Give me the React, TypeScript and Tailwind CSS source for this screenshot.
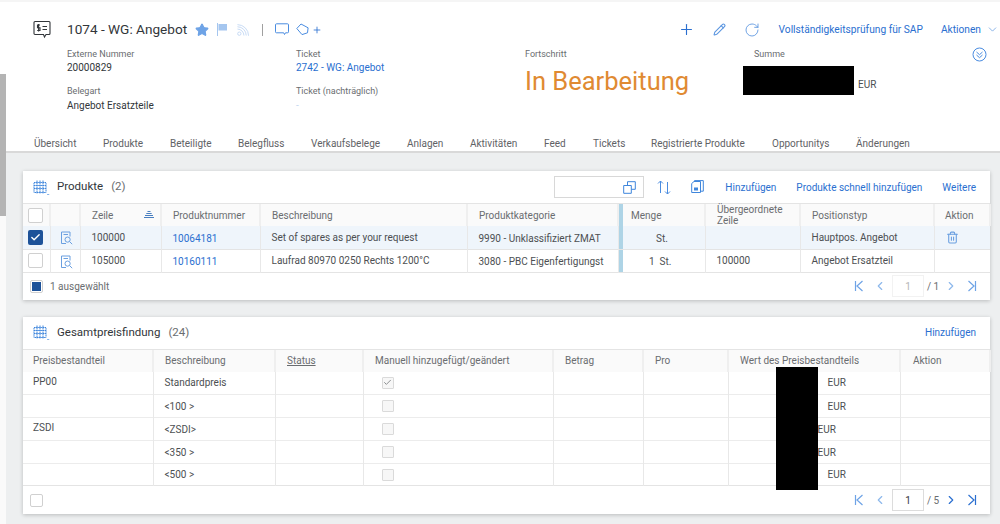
import type { ReactNode } from "react";
import { Check, ChevronDown, ChevronLeft, ChevronRight, Plus, RotateCw, Pencil, Star, Trash2 } from "lucide-react";

const LINK = "text-[#2a6fd0]";

const TABS = [
  { label: "Übersicht", w: "w-[69px]" },
  { label: "Produkte", w: "w-[67px]" },
  { label: "Beteiligte", w: "w-[68px]" },
  { label: "Belegfluss", w: "w-[73px]" },
  { label: "Verkaufsbelege", w: "w-[96px]" },
  { label: "Anlagen", w: "w-[63px]" },
  { label: "Aktivitäten", w: "w-[74px]" },
  { label: "Feed", w: "w-[49px]" },
  { label: "Tickets", w: "w-[58px]" },
  { label: "Registrierte Produkte", w: "w-[121px]" },
  { label: "Opportunitys", w: "w-[84px]" },
  { label: "Änderungen", w: "w-[80px]" },
];

function GridIcon() {
  return (
    <svg width="17" height="17" viewBox="0 0 17 17" fill="none" stroke="#3f86dc" strokeWidth="1">
      <path d="M1 3.5h12v10H1zM1 6.5h12M1 9.5h12M4 1.5v13M7 1.5v13M10 1.5v13" strokeDasharray="1.6 .5" />
      <path d="M14.2 15l1 1 1-1" strokeWidth=".7" />
    </svg>
  );
}

function DocSearch() {
  return (
    <svg width="13" height="14" viewBox="0 0 13 14" fill="none" stroke="#6a9fe0" strokeWidth="1">
      <path d="M6 12.5H1.5V1h8.5v4.5M3.5 3.5h4.5" />
      <circle cx="7.6" cy="8.6" r="2.6" />
      <path d="M9.6 10.6l2.6 2.6" />
    </svg>
  );
}

function PageFirst({ color }: { color: string }) {
  return (
    <svg width="12" height="12" viewBox="0 0 12 12" fill="none" stroke={color} strokeWidth="1.2">
      <path d="M2.5 1v10M9.5 1L4 6l5.5 5" />
    </svg>
  );
}

function PageLast({ color }: { color: string }) {
  return (
    <svg width="12" height="12" viewBox="0 0 12 12" fill="none" stroke={color} strokeWidth="1.2">
      <path d="M9.5 1v10M2.5 1L8 6l-5.5 5" />
    </svg>
  );
}

function Box({ checked }: { checked?: boolean }) {
  if (checked)
    return (
      <div className="flex h-[15px] w-[15px] items-center justify-center rounded-[2px] bg-[#1d5299]">
        <Check size={11} strokeWidth={3} color="#fff" />
      </div>
    );
  return <div className="h-[15px] w-[15px] rounded-[2px] border border-[#d0d0d0] bg-white" />;
}

function Field({ label, children }: { label: string; children: ReactNode }) {
  return (
    <div>
      <div className="text-[9px] leading-[12px] text-[#6a6d70]">{label}</div>
      {children}
    </div>
  );
}

function Th({ children, className = "" }: { children?: ReactNode; className?: string }) {
  return (
    <th className={`border-r-2 border-[#efefef] bg-[#fafafa] pr-[6px] text-left align-middle text-[10px] leading-[11px] font-normal text-[#6a6d70] ${className || "pl-[11px]"}`}>
      {children}
    </th>
  );
}

function Td({ children, className = "pl-[11px]", color = "text-[#4c4f52]" }: { children?: ReactNode; className?: string; color?: string }) {
  return (
    <td className={`border-r border-[#e8e8e8] align-middle text-[10px] whitespace-nowrap ${color} ${className}`}>
      {children}
    </td>
  );
}

function Pager({ active }: { active?: boolean }) {
  return (
    <div className="flex items-center">
      <PageFirst color="#6ea3e6" />
      <ChevronLeft size={14} color="#8db8ec" className="ml-[8px]" />
      <div
        className={`ml-[5px] flex h-[22px] w-[32px] items-center justify-center text-[10px] ${
          active ? "border border-[#dcdcdc] bg-white text-[#32363a]" : "border border-[#f2f2f2] text-[#b5b5b5]"
        }`}
      >
        1
      </div>
      <span className="ml-[3px] w-[16px] text-[10px] text-[#6a6d70]">/ {active ? 5 : 1}</span>
      <ChevronRight size={14} color={active ? "#2a6fd0" : "#8db8ec"} className="ml-[1px]" />
      <div className="ml-[8px]">
        <PageLast color={active ? "#2a6fd0" : "#6ea3e6"} />
      </div>
    </div>
  );
}

function Header() {
  return (
    <div className="flex h-[153px] flex-col border-t-2 border-b-2 border-t-[#f5f5f5] border-b-[#d9d9d9] bg-white">
      <div className="flex h-[42px] items-center pt-[13px] pl-[33px]">
        <svg width="18" height="19" viewBox="0 0 18 19" fill="none" stroke="#32363a" strokeWidth="1.1" className="shrink-0">
          <path d="M2 1.5h14a1 1 0 0 1 1 1v11a1 1 0 0 1-1 1h-3l-1.5 2.5-1-2.5H2a1 1 0 0 1-1-1v-11a1 1 0 0 1 1-1z" />
          <path d="M7 5H4.5v2.8H7v2.7H4.2M5.6 4v7.5M9.5 6.5h4.5M9.5 9.5h4.5" />
        </svg>
        <h1 className="ml-[16px] w-[121px] shrink-0 text-[13.6px] font-normal whitespace-nowrap text-[#32363a]">1074 - WG: Angebot</h1>
        <Star size={14} fill="#6ea3e6" color="#6ea3e6" className="ml-[7px]" />
        <svg width="11" height="13" viewBox="0 0 11 13" className="ml-[8px]" fill="#a5c6ef">
          <path d="M0 0h1v13H0zM1.5 1H10v6.5H1.5z" />
        </svg>
        <svg width="12" height="12" viewBox="0 0 13 13" className="ml-[9px]" fill="none" stroke="#c3d8f3" strokeWidth="1">
          <circle cx="2.5" cy="10.5" r="1.8" />
          <path d="M.5 5.5a7 7 0 0 1 7 7M.5 3a9.5 9.5 0 0 1 9.5 9.5M.5 .7a12 12 0 0 1 12 12" />
        </svg>
        <div className="ml-[13px] h-[12px] w-px bg-[#a0a0a0]" />
        <svg width="14" height="13" viewBox="0 0 14 13" className="ml-[12px]" fill="none" stroke="#4a8ce0" strokeWidth="1">
          <path d="M1.5 .8h11a1 1 0 0 1 1 1v7a1 1 0 0 1-1 1h-2l-1 1.7-.8-1.7H1.5a1 1 0 0 1-1-1v-7a1 1 0 0 1 1-1z" />
        </svg>
        <svg width="13" height="13" viewBox="0 0 13 13" className="ml-[7px]" fill="none" stroke="#4a8ce0" strokeWidth="1">
          <path d="M5 1L.8 5.5 6 11.6l5.5-1.8.6-5z" />
        </svg>
        <Plus size={10} color="#2a6fd0" strokeWidth={2} className="ml-[3px]" />
        <div className="ml-auto flex items-center pr-[1px]">
          <Plus size={17} color="#2a6fd0" strokeWidth={1.6} />
          <Pencil size={13} color="#5b96e0" className="ml-[18px]" />
          <RotateCw size={16} color="#5b96e0" strokeWidth={1.3} className="ml-[18px]" />
          <span className={`ml-[19px] text-[10.2px] ${LINK}`}>Vollständigkeitsprüfung für SAP</span>
          <span className={`ml-[18px] text-[10.2px] ${LINK}`}>Aktionen</span>
          <ChevronDown size={13} color="#5b96e0" className="ml-[5px]" strokeWidth={1.3} />
        </div>
      </div>
      <div className="mt-[4px] flex pl-[67px]">
        <div className="flex w-[229px] flex-col gap-[9px]">
          <Field label="Externe Nummer">
            <div className="text-[10px] leading-[16px] text-[#32363a]">20000829</div>
          </Field>
          <Field label="Belegart">
            <div className="text-[10px] leading-[18px] text-[#32363a]">Angebot Ersatzteile</div>
          </Field>
        </div>
        <div className="flex w-[229px] flex-col gap-[9px]">
          <Field label="Ticket">
            <div className={`text-[10px] leading-[16px] ${LINK}`}>2742 - WG: Angebot</div>
          </Field>
          <Field label="Ticket (nachträglich)">
            <div className="text-[10px] leading-[18px] text-[#c5d8f0]">-</div>
          </Field>
        </div>
        <div className="w-[229px]">
          <Field label="Fortschritt">
            <div className="mt-[3px] text-[25.5px] leading-[36px] text-[#e08a32]">In Bearbeitung</div>
          </Field>
        </div>
        <div className="w-[218px]">
          <Field label="Summe">
            <div className="-ml-[11px] flex items-end">
              <div className="mt-[6px] h-[29px] w-[111px] bg-black" />
              <span className="mb-[3px] ml-[4px] text-[10px] leading-[14px] text-[#4c4f52]">EUR</span>
            </div>
          </Field>
        </div>
        <svg width="15" height="15" viewBox="0 0 15 15" fill="none" stroke="#4a8ce0" strokeWidth="1" className="-mt-[1px]">
          <circle cx="7.5" cy="7.5" r="6.5" />
          <path d="M4.5 5l3 2.7 3-2.7M4.5 8l3 2.7 3-2.7" />
        </svg>
      </div>
      <div className="mt-auto flex h-[23px] pt-[6px] pl-[34px]">
        {TABS.map((t) => (
          <div key={t.label} className={`${t.w} shrink-0 text-[10px] leading-[20px] whitespace-nowrap text-[#5f6265]`}>
            {t.label}
          </div>
        ))}
      </div>
    </div>
  );
}

function ProductsCard() {
  return (
    <section className="w-[967px] bg-white shadow-[0_1px_4px_rgba(0,0,0,0.22)]">
      <div className="flex h-[33px] items-center border-b border-[#e4e4e4] pr-[14px] pl-[10px]">
        <GridIcon />
        <span className="ml-[7px] text-[11.5px] text-[#32363a]">Produkte</span>
        <span className="ml-[8px] text-[11.5px] text-[#6a6d70]">(2)</span>
        <div className="ml-auto flex h-[22px] w-[90px] items-center justify-end border border-[#d8d8d8] pr-[7px]">
          <svg width="13" height="13" viewBox="0 0 13 13" fill="none" stroke="#3f86dc" strokeWidth="1">
            <path d="M.7 4.5h7.6v7.8H.7zM4.5 4.5V.7h7.8v7.6H8.3" />
          </svg>
        </div>
        <svg width="14" height="15" viewBox="0 0 14 15" fill="none" stroke="#4a8ce0" strokeWidth="1" className="ml-[13px]">
          <path d="M3.5 13V1M1 3.5L3.5 1 6 3.5M10.5 2v12M8 11.5l2.5 2.5 2.5-2.5" />
        </svg>
        <svg width="13" height="14" viewBox="0 0 13 14" fill="none" stroke="#3f86dc" strokeWidth="1" className="ml-[20px]">
          <path d="M.7 3.5L3 1.5h6.5v11H.7zM3.5 1.5V.6h8.8v10.6h-2.8" />
          <rect x="3" y="7.5" width="4" height="3" fill="#3f86dc" stroke="none" />
        </svg>
        <span className={`ml-[21px] text-[10px] ${LINK}`}>Hinzufügen</span>
        <span className={`ml-[20px] text-[10px] ${LINK}`}>Produkte schnell hinzufügen</span>
        <span className={`ml-[20px] text-[10px] ${LINK}`}>Weitere</span>
      </div>
      <table className="w-full table-fixed border-collapse border-b border-[#e4e4e4]">
        <colgroup>
          <col className="w-[27px]" />
          <col className="w-[30px]" />
          <col className="w-[81px]" />
          <col className="w-[99px]" />
          <col className="w-[207px]" />
          <col className="w-[151px]" />
          <col className="w-[5px]" />
          <col className="w-[82px]" />
          <col className="w-[95px]" />
          <col className="w-[134px]" />
          <col className="w-[56px]" />
        </colgroup>
        <thead>
          <tr className="h-[22px]">
            <Th className="pl-[5px]"><Box /></Th>
            <Th />
            <Th>
              <div className="flex items-center justify-between">
                Zeile
                <svg width="10" height="8" viewBox="0 0 10 8" stroke="#4a7fc0" strokeWidth="1">
                  <path d="M3.5 .5h3M2.3 2.5h5.4M1 4.5h8M0 6.5h10" />
                </svg>
              </div>
            </Th>
            <Th>Produktnummer</Th>
            <Th>Beschreibung</Th>
            <Th>Produktkategorie</Th>
            <th className="bg-[#aed4e6] p-0" />
            <Th className="pl-[8px]">Menge</Th>
            <Th>Übergeordnete Zeile</Th>
            <Th>Positionstyp</Th>
            <Th className="border-r-0 pl-[10px]">Aktion</Th>
          </tr>
        </thead>
        <tbody>
          <tr className="h-[23px] border-b border-[#e4e4e4] bg-[#eff5fb]">
            <Td className="pl-[5px]"><Box checked /></Td>
            <Td className="pt-[2px] pl-[9px]"><DocSearch /></Td>
            <Td>100000</Td>
            <Td className="pt-[2px] pl-[11px]" color={LINK}>10064181</Td>
            <Td>Set of spares as per your request</Td>
            <Td className="pt-[2px] pl-[11px]">9990 - Unklassifiziert ZMAT</Td>
            <td className="bg-[#aed4e6] p-0" />
            <Td className="pt-[2px] pl-[33px]">St.</Td>
            <Td />
            <Td>Hauptpos. Angebot</Td>
            <td className="pl-[11px]"><Trash2 size={13} color="#6a9fe0" /></td>
          </tr>
          <tr className="h-[23px] bg-white">
            <Td className="pl-[5px]"><Box /></Td>
            <Td className="pt-[2px] pl-[9px]"><DocSearch /></Td>
            <Td>105000</Td>
            <Td className="pt-[2px] pl-[11px]" color={LINK}>10160111</Td>
            <Td>Laufrad 80970 0250 Rechts 1200°C</Td>
            <Td className="pt-[2px] pl-[11px]">3080 - PBC Eigenfertigungst</Td>
            <td className="bg-[#aed4e6] p-0" />
            <Td className="pt-[2px] pl-[26px]">1&nbsp; St.</Td>
            <Td>100000</Td>
            <Td>Angebot Ersatzteil</Td>
            <td />
          </tr>
        </tbody>
      </table>
      <div className="flex h-[27px] items-center pr-[12px] pl-[7px]">
        <div className="flex h-[13px] w-[13px] items-center justify-center rounded-[2px] border border-[#d0d0d0]">
          <div className="h-[9px] w-[9px] bg-[#1d5299]" />
        </div>
        <span className="ml-[7px] text-[10px] text-[#6a6d70]">1 ausgewählt</span>
        <div className="ml-auto"><Pager /></div>
      </div>
    </section>
  );
}

const PRICE_ROWS = [
  { code: "PP00", desc: "Standardpreis", checked: true, eur: "pl-[99px]", h: "h-[23px]" },
  { code: "", desc: "<100 >", checked: false, eur: "pl-[99px]", h: "h-[23px]" },
  { code: "ZSDI", desc: "<ZSDI>", checked: false, eur: "pl-[89px]", h: "h-[23px]" },
  { code: "", desc: "<350 >", checked: false, eur: "pl-[89px]", h: "h-[23px]" },
  { code: "", desc: "<500 >", checked: false, eur: "pl-[99px]", h: "h-[22px]" },
];

function PricingCard() {
  return (
    <section className="relative w-[967px] bg-white shadow-[0_1px_4px_rgba(0,0,0,0.22)]">
      <div className="flex h-[33px] items-center border-b border-[#e4e4e4] pr-[14px] pl-[10px]">
        <GridIcon />
        <span className="ml-[7px] text-[11.5px] text-[#32363a]">Gesamtpreisfindung</span>
        <span className="ml-[8px] text-[11.5px] text-[#6a6d70]">(24)</span>
        <span className={`ml-auto text-[10px] ${LINK}`}>Hinzufügen</span>
      </div>
      <table className="w-full table-fixed border-collapse border-b border-[#e4e4e4]">
        <colgroup>
          <col className="w-[130px]" />
          <col className="w-[122px]" />
          <col className="w-[88px]" />
          <col className="w-[190px]" />
          <col className="w-[90px]" />
          <col className="w-[85px]" />
          <col className="w-[172px]" />
          <col className="w-[90px]" />
        </colgroup>
        <thead>
          <tr className="h-[22px]">
            <Th className="pl-[10px]">Preisbestandteil</Th>
            <Th>Beschreibung</Th>
            <Th><span className="underline">Status</span></Th>
            <Th>Manuell hinzugefügt/geändert</Th>
            <Th>Betrag</Th>
            <Th>Pro</Th>
            <Th>Wert des Preisbestandteils</Th>
            <Th className="border-r-0 pl-[12px]">Aktion</Th>
          </tr>
        </thead>
        <tbody>
          {PRICE_ROWS.map((r) => (
            <tr key={r.desc} className={`${r.h} border-b border-[#ececec] last:border-b-0`}>
              <Td className="pb-[3px] pl-[10px]">{r.code}</Td>
              <Td>{r.desc}</Td>
              <Td />
              <Td className="pl-[18px]">
                <div className="flex h-[12px] w-[12px] items-center justify-center rounded-[1px] border border-[#dadada] bg-[#f7f7f7]">
                  {r.checked && <Check size={9} color="#6a6d70" />}
                </div>
              </Td>
              <Td />
              <Td />
              <Td className={r.eur}>EUR</Td>
              <td />
            </tr>
          ))}
        </tbody>
      </table>
      <div className="flex h-[28px] items-center pr-[12px] pl-[7px]">
        <div className="h-[13px] w-[13px] rounded-[2px] border border-[#d0d0d0]" />
        <div className="ml-auto"><Pager active /></div>
      </div>
      <div className="absolute top-[50px] left-[753px] h-[123px] w-[42px] bg-black" />
    </section>
  );
}

export default function App() {
  return (
    <div className="relative h-[524px] w-[1000px] overflow-hidden bg-white font-['Roboto','Noto_Sans',sans-serif]">
      <Header />
      <div className="flex h-[371px] flex-col gap-[17px] bg-[#edeff0] pt-[18px] pl-[23px] shadow-[inset_6px_0_0_#fafafa]">
        <ProductsCard />
        <PricingCard />
      </div>
      {/* scrollbar thumb sits over the page edge */}
      <div className="absolute top-[74px] left-0 h-[142px] w-[6px] bg-[#b4b4b4]" />
    </div>
  );
}
